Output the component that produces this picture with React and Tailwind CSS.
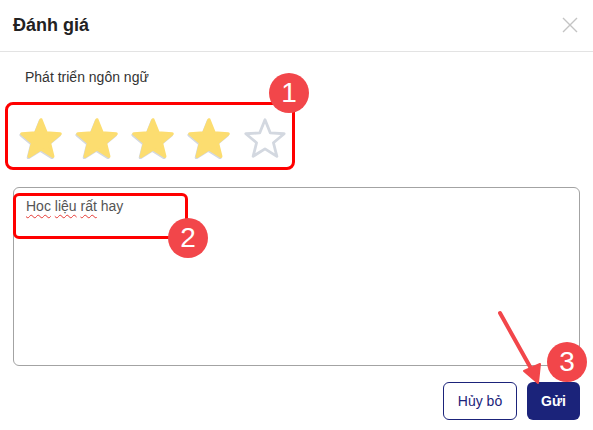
import React from "react";

const STAR = "M50 3 L62.9 35.2 L97.5 37.5 L70.9 59.8 L79.4 93.4 L50 75 L20.6 93.4 L29.1 59.8 L2.5 37.5 L37.1 35.2 Z";

const Star = ({ filled }) => (
  <svg width="44" height="42" viewBox="-4 -4 108 104">
    {filled ? (
      <>
        <path d={STAR} transform="translate(-2 3)" fill="#d3d8e0" stroke="#d3d8e0" strokeWidth="8" strokeLinejoin="round" />
        <path d={STAR} fill="#fcdd70" stroke="#fcdd70" strokeWidth="8" strokeLinejoin="round" />
      </>
    ) : (
      <path d={STAR} fill="#ffffff" stroke="#d3d8e0" strokeWidth="7" strokeLinejoin="round" />
    )}
  </svg>
);

const Badge = ({ n, className }) => (
  <div
    className={`absolute w-[40px] h-[40px] rounded-full bg-[#f2464a] text-white flex items-center justify-center text-[28px] leading-none ${className}`}
  >
    {n}
  </div>
);

export default function App() {
  return (
    <div className="relative w-[593px] h-[430px] bg-white font-['Liberation_Sans',Arial,sans-serif] overflow-hidden">
      {/* Header */}
      <div className="h-[52px] flex items-center justify-between pl-[13px] pr-[15px] border-b border-[#e3e3e3]">
        <h1 className="text-[18px] font-bold text-[#222]">Đánh giá</h1>
        <svg width="16" height="16" viewBox="0 0 16 16" className="mb-[2px]">
          <path d="M1 1 L15 15 M15 1 L1 15" stroke="#c4c4c4" strokeWidth="1.4" />
        </svg>
      </div>

      {/* Body */}
      <div className="px-[13px]">
        <p className="pl-3 pt-[17px] text-[14px] leading-[16px] text-[#333]">Phát triển ngôn ngữ</p>

        <div className="flex gap-[12px] ml-[6px] mt-[32px]">
          <Star filled />
          <Star filled />
          <Star filled />
          <Star filled />
          <Star />
        </div>

        <div className="mt-[28px] h-[179px] border border-[#a3a3a3] rounded-md px-[12px] pt-[8px] text-[14px] text-[#555]">
          <span className="underline decoration-wavy decoration-[#e53935] decoration-1 underline-offset-[3px]">Hoc</span>{" "}
          <span className="underline decoration-wavy decoration-[#e53935] decoration-1 underline-offset-[3px]">liệu</span>{" "}
          <span className="underline decoration-wavy decoration-[#e53935] decoration-1 underline-offset-[3px]">rất</span> hay
        </div>

        <div className="flex justify-end gap-[10px] mt-[16px]">
          <button className="w-[74px] h-[38px] rounded-md border border-[#1b237a] text-[#1b237a] text-[14px]">Hủy bỏ</button>
          <button className="w-[53px] h-[38px] rounded-md bg-[#1b237a] text-white text-[14px] font-semibold">Gửi</button>
        </div>
      </div>

      {/* Annotations */}
      <div className="absolute left-[5px] top-[102px] w-[290px] h-[68px] border-[3px] border-[#ff0000] rounded-lg" />
      <Badge n="1" className="left-[269px] top-[73px]" />

      <div className="absolute left-[13px] top-[193px] w-[175px] h-[46px] border-[3px] border-[#ff0000] rounded-md" />
      <Badge n="2" className="left-[168px] top-[218px]" />

      <svg className="absolute left-0 top-0" width="593" height="430">
        <line x1="500" y1="313" x2="533" y2="372" stroke="#f2464a" strokeWidth="4" strokeLinecap="round" />
        <path d="M538 383 L524 371 L540 364 Z" fill="#f2464a" stroke="#f2464a" strokeWidth="2" strokeLinejoin="round" />
      </svg>
      <Badge n="3" className="left-[547px] top-[342px]" />
    </div>
  );
}
